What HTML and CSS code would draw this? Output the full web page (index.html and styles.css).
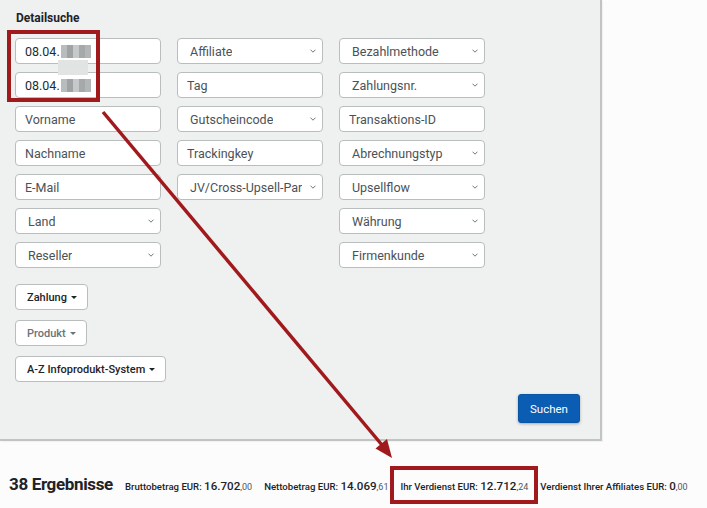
FILE: index.html
```html
<!DOCTYPE html>
<html lang="de">
<head>
<meta charset="utf-8">
<title>Detailsuche</title>
<link rel="stylesheet" href="styles.css">
</head>
<body>
<div class="page">
  <section class="panel">
    <h2 class="title">Detailsuche</h2>
    <div class="grid">
      <div class="col">
        <div class="field input filled">08.04.<span class="blur"></span></div>
        <div class="field input filled">08.04.<span class="blur"></span></div>
        <div class="field input">Vorname</div>
        <div class="field input">Nachname</div>
        <div class="field input">E-Mail</div>
        <div class="field select"><span>Land</span><svg class="chev" viewBox="0 0 6 4"><path d="M0.5 0.7 L3 3.2 L5.5 0.7"/></svg></div>
        <div class="field select"><span>Reseller</span><svg class="chev" viewBox="0 0 6 4"><path d="M0.5 0.7 L3 3.2 L5.5 0.7"/></svg></div>
      </div>
      <div class="col">
        <div class="field select"><span>Affiliate</span><svg class="chev" viewBox="0 0 6 4"><path d="M0.5 0.7 L3 3.2 L5.5 0.7"/></svg></div>
        <div class="field input">Tag</div>
        <div class="field select"><span>Gutscheincode</span><svg class="chev" viewBox="0 0 6 4"><path d="M0.5 0.7 L3 3.2 L5.5 0.7"/></svg></div>
        <div class="field input">Trackingkey</div>
        <div class="field select"><span>JV/Cross-Upsell-Par</span><svg class="chev" viewBox="0 0 6 4"><path d="M0.5 0.7 L3 3.2 L5.5 0.7"/></svg></div>
      </div>
      <div class="col">
        <div class="field select"><span>Bezahlmethode</span><svg class="chev" viewBox="0 0 6 4"><path d="M0.5 0.7 L3 3.2 L5.5 0.7"/></svg></div>
        <div class="field select"><span>Zahlungsnr.</span><svg class="chev" viewBox="0 0 6 4"><path d="M0.5 0.7 L3 3.2 L5.5 0.7"/></svg></div>
        <div class="field input">Transaktions-ID</div>
        <div class="field select"><span>Abrechnungstyp</span><svg class="chev" viewBox="0 0 6 4"><path d="M0.5 0.7 L3 3.2 L5.5 0.7"/></svg></div>
        <div class="field select"><span>Upsellflow</span><svg class="chev" viewBox="0 0 6 4"><path d="M0.5 0.7 L3 3.2 L5.5 0.7"/></svg></div>
        <div class="field select"><span>Währung</span><svg class="chev" viewBox="0 0 6 4"><path d="M0.5 0.7 L3 3.2 L5.5 0.7"/></svg></div>
        <div class="field select"><span>Firmenkunde</span><svg class="chev" viewBox="0 0 6 4"><path d="M0.5 0.7 L3 3.2 L5.5 0.7"/></svg></div>
      </div>
    </div>
    <div class="dropdowns">
      <button class="dd">Zahlung<i class="caret"></i></button>
      <button class="dd muted">Produkt<i class="caret"></i></button>
      <button class="dd">A-Z Infoprodukt-System<i class="caret"></i></button>
    </div>
    <div class="actions">
      <button class="primary">Suchen</button>
    </div>
  </section>

  <div class="results">
    <span class="count">38 Ergebnisse</span>
    <span class="stat">Bruttobetrag EUR: <b>16.702</b><small>,00</small></span>
    <span class="stat">Nettobetrag EUR: <b>14.069</b><small>,61</small></span>
    <span class="stat highlight">Ihr Verdienst EUR: <b>12.712</b><small>,24</small></span>
    <span class="stat">Verdienst Ihrer Affiliates EUR: <b>0</b><small>,00</small></span>
  </div>

  <div class="mark-dates"><span class="blur-patch"></span></div>
  <svg class="arrow" viewBox="0 0 707 508" width="707" height="508">
    <line x1="103" y1="112" x2="382" y2="445" />
    <polygon points="392,458 375.5,448.5 387,439" />
  </svg>
</div>
</body>
</html>
```

FILE: styles.css
```css
* { box-sizing: border-box; }

html, body {
  margin: 0;
  padding: 0;
  background: #fcfcfc;
  font-family: Roboto, "Liberation Sans", Arial, sans-serif;
  color: #1d2327;
}

.page {
  position: relative;
  width: 707px;
  height: 508px;
  overflow: hidden;
}

.panel {
  width: 602px;
  background: #eff0f0;
  border-right: 2px solid #c2c4c4;
  border-bottom: 2px solid #c2c4c4;
  padding: 10px 20px 16px 15px;
  box-shadow: 1px 1px 1px rgba(0,0,0,0.04);
}

.title {
  margin: 0 0 12px 1px;
  font-size: 12px;
  line-height: 16px;
  font-weight: 700;
  color: #1d2327;
}

.grid {
  display: flex;
  gap: 16px;
  align-items: flex-start;
}

.col {
  width: 146px;
  display: flex;
  flex-direction: column;
  gap: 8px;
}

.field {
  height: 26px;
  background: #fff;
  border: 1px solid #b9bdbd;
  border-radius: 4px;
  font-size: 12.5px;
  color: #4b5257;
  display: flex;
  align-items: center;
  white-space: nowrap;
  overflow: hidden;
}

.input { padding: 0 8px 0 9px; }
.input.filled { color: #1b2d33; }

.select {
  padding: 0 6px 0 12px;
  justify-content: space-between;
}

.select span { overflow: hidden; }

.chev {
  width: 6px;
  height: 4px;
  flex: none;
  margin-left: 4px;
  fill: none;
  stroke: #5f666b;
  stroke-width: 0.9;
}

.blur {
  display: inline-block;
  width: 30px;
  height: 13px;
  margin-left: 1px;
  background:
    linear-gradient(90deg, #b9bcbc 0 6px, #9fa3a4 6px 12px, #c6c9c9 12px 18px, #a5a9a9 18px 24px, #b3b6b6 24px 30px);
}

.dropdowns {
  margin-top: 16px;
  display: flex;
  flex-direction: column;
  align-items: flex-start;
  gap: 10px;
}

.dd {
  height: 26px;
  padding: 0 10px 0 11px;
  background: #fff;
  border: 1px solid #b9bdbd;
  border-radius: 4px;
  font-family: Roboto, "Liberation Sans", Arial, sans-serif;
  font-size: 11px;
  font-weight: 500;
  color: #1d2327;
  display: flex;
  align-items: center;
}

.dd.muted { color: #6c7277; }

.caret {
  display: inline-block;
  margin-left: 4px;
  width: 0;
  height: 0;
  border-left: 3px solid transparent;
  border-right: 3px solid transparent;
  border-top: 3px solid currentColor;
}

.actions {
  margin-top: 12px;
  display: flex;
  justify-content: flex-end;
}

.primary {
  height: 29px;
  width: 62px;
  padding: 0;
  background: #0b5db3;
  border: 1px solid #0a56a6;
  border-radius: 3px;
  color: #fff;
  font-family: Roboto, "Liberation Sans", Arial, sans-serif;
  font-size: 11.5px;
  box-shadow: 0 1px 3px rgba(0,0,0,0.3);
}

.results {
  display: flex;
  align-items: baseline;
  gap: 12px;
  padding: 25px 0 0 9px;
  white-space: nowrap;
}

.count {
  font-size: 17px;
  font-weight: 700;
  letter-spacing: -0.35px;
  color: #1d2327;
}

.stat {
  font-size: 9.6px;
  font-weight: 500;
  color: #1d2327;
  line-height: 13px;
}

.stat b {
  font-size: 11.6px;
  font-weight: 500;
}

.stat small {
  font-size: 9px;
  font-weight: 400;
  color: #50575e;
}

.highlight {
  border: 4px solid #a0191c;
  padding: 10px 6px 6px 6px;
  margin: 0 -10px;
}

.mark-dates {
  position: absolute;
  left: 7px;
  top: 30px;
  width: 93px;
  height: 72px;
  border: 4px solid #a0191c;
}

.blur-patch {
  position: absolute;
  left: 47px;
  top: 26px;
  width: 30px;
  height: 15px;
  background: #e2e4e4;
}

.arrow {
  position: absolute;
  left: 0;
  top: 0;
  pointer-events: none;
}

.arrow line {
  stroke: #a0191c;
  stroke-width: 3.5;
}

.arrow polygon { fill: #a0191c; }
```
